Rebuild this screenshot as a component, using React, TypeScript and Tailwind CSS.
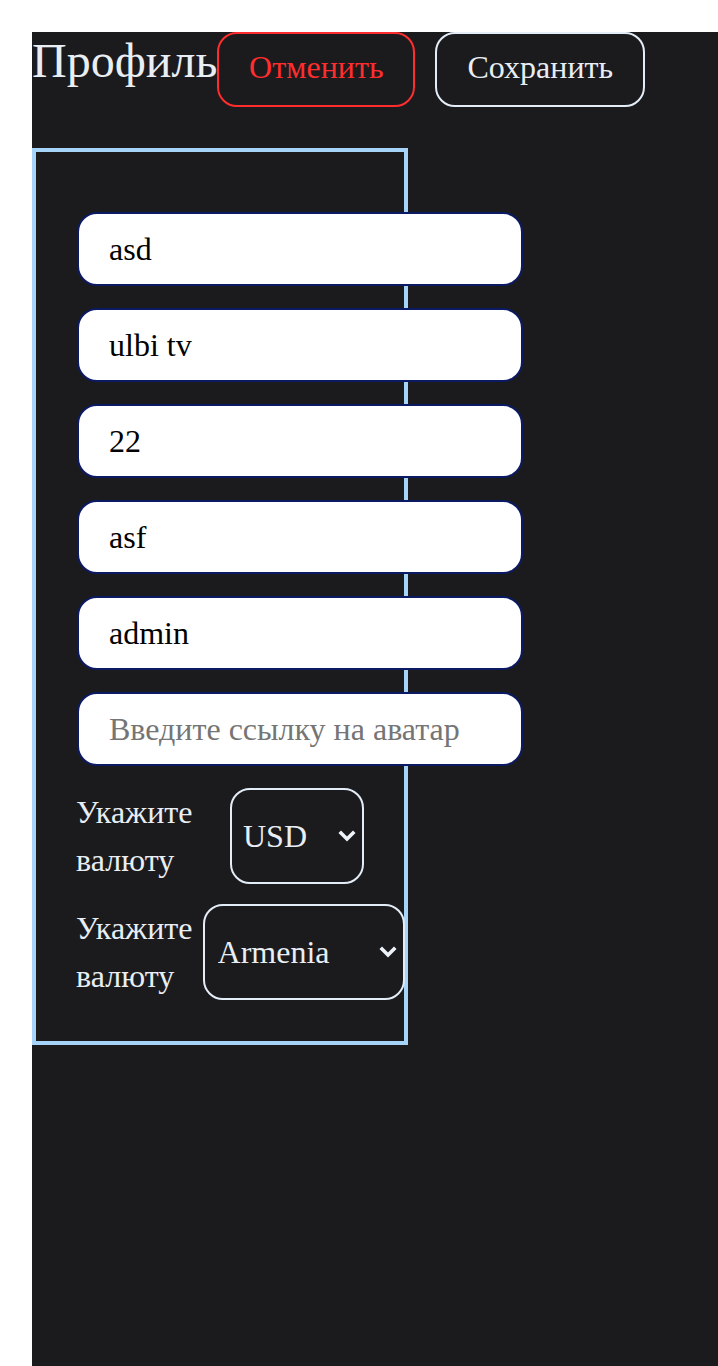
import { useState } from 'react';

const fields = ['asd', 'ulbi tv', '22', 'asf', 'admin'];

function Chevron() {
  return (
    <svg
      width="18"
      height="12"
      viewBox="0 0 18 12"
      className="pointer-events-none absolute top-1/2 right-[8px] -translate-y-1/2"
    >
      <polyline points="3,3 9,9 15,3" fill="none" stroke="#eef3fa" strokeWidth="3.6" strokeLinecap="square" />
    </svg>
  );
}

export default function App() {
  const [values, setValues] = useState(fields);
  const [avatar, setAvatar] = useState('');
  const [currency, setCurrency] = useState('USD');
  const [country, setCountry] = useState('Armenia');

  const inputCls =
    'ml-[1px] h-[74px] w-[446px] shrink-0 rounded-[20px] border-2 border-[#0c1a63] bg-white pl-[30px] [font-family:Liberation_Serif,serif] text-[32px] text-black outline-none placeholder:text-[#757575]';
  const selectCls =
    'h-[96px] w-full appearance-none rounded-[20px] border-2 border-[#e4edf7] bg-[#1b1b1e] [font-family:Liberation_Serif,serif] text-[32px] text-[#e9eef5] outline-none';

  return (
    <div className="min-h-screen bg-white pl-8 pt-8">
      <div className="min-h-[1334px] bg-[#1b1b1e] [font-family:Liberation_Serif,serif]">
        <div className="flex items-start">
          <h1 className="mt-[1px] text-[48px] leading-[55px] font-normal text-[#e9eef5]">Профиль</h1>
          <button className="h-[75px] w-[198px] rounded-[20px] border-2 border-[#ff2d2d] pb-[5px] text-[32px] text-[#ff2d2d]">
            Отменить
          </button>
          <button className="ml-5 h-[75px] w-[210px] rounded-[20px] border-2 border-[#e4edf7] pb-[5px] text-[32px] text-[#e9eef5]">
            Сохранить
          </button>
        </div>

        <div className="mt-[41px] flex w-[376px] flex-col border-4 border-[#a6d4f8] px-10 pt-[60px] pb-[41px]">
          <div className="flex flex-col gap-[22px]">
            {values.map((v, i) => (
              <input
                key={i}
                value={v}
                onChange={(e) => {
                  const next = [...values];
                  next[i] = e.target.value;
                  setValues(next);
                }}
                className={inputCls}
              />
            ))}
            <input
              value={avatar}
              onChange={(e) => setAvatar(e.target.value)}
              placeholder="Введите ссылку на аватар"
              className={inputCls}
            />
          </div>

          <div className="mt-[22px] flex w-[288px] items-center gap-[10px]">
            <span className="flex-1 text-[32px] leading-[48px] text-[#e9eef5]">Укажите валюту</span>
            <div className="relative w-[134px] shrink-0">
              <select value={currency} onChange={(e) => setCurrency(e.target.value)} className={selectCls + ' pl-[11px]'}>
                <option>USD</option>
                <option>EUR</option>
                <option>RUB</option>
              </select>
              <Chevron />
            </div>
          </div>

          <div className="mt-5 flex w-[288px] items-center gap-[10px]">
            <span className="flex-1 text-[32px] leading-[48px] text-[#e9eef5]">Укажите валюту</span>
            <div className="relative w-[202px] shrink-0">
              <select value={country} onChange={(e) => setCountry(e.target.value)} className={selectCls + ' pl-[13px]'}>
                <option>Armenia</option>
                <option>Russia</option>
                <option>Belarus</option>
                <option>Ukraine</option>
                <option>Kazakhstan</option>
              </select>
              <Chevron />
            </div>
          </div>
        </div>
      </div>
    </div>
  );
}
